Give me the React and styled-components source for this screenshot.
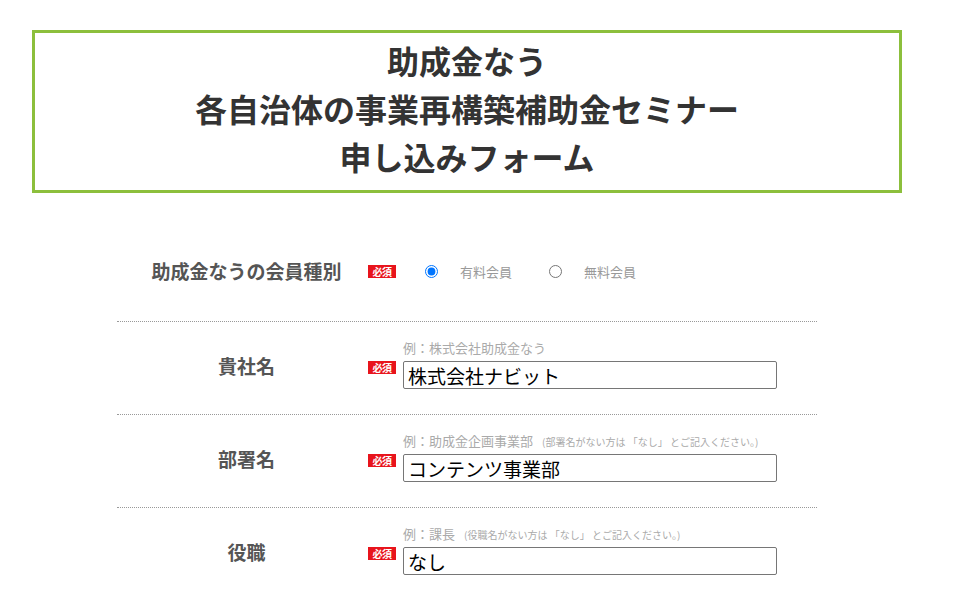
import React from "react";
import styled, { createGlobalStyle } from "styled-components";

const GlobalStyle = createGlobalStyle`
  body {
    margin: 0;
    background: #fff;
    font-family: "Noto Sans CJK JP", "Noto Sans", sans-serif;
  }
`;

const Page = styled.div`
  width: 934px;
  padding-top: 30px;
`;

const TitleBox = styled.div`
  margin: 0 32px;
  border: 3px solid #8cbf3c;
  padding: 3px 0 10px;
  text-align: center;
`;

const Title = styled.h1`
  margin: 0;
  font-size: 32px;
  line-height: 48px;
  font-weight: bold;
  color: #333;
`;

const Form = styled.div`
  width: 700px;
  margin: 28px auto 0;
`;

const Row = styled.div`
  display: grid;
  grid-template-columns: 251px 1fr;
  height: ${(p) => p.height}px;
  border-top: ${(p) => (p.first ? "none" : "1px dotted #999")};
`;

const Label = styled.div`
  display: flex;
  align-items: center;
  justify-content: center;
  padding: 0 0 ${(p) => (p.raise ? 5 : 1)}px 8px;
  font-size: 19px;
  font-weight: bold;
  color: #555;
`;

const Field = styled.div`
  padding-top: 16px;
`;

const InlineField = styled.div`
  display: flex;
  align-items: center;
`;

const Hint = styled.div`
  margin-left: 35px;
  height: 20px;
  line-height: 20px;
  font-size: 13px;
  color: #aaa;
  white-space: nowrap;
`;

const SubHint = styled.span`
  margin-left: 9px;
  font-size: 10px;
`;

const InputLine = styled.div`
  display: flex;
  align-items: flex-start;
  gap: 7px;
  margin-top: 3px;
`;

const Badge = styled.span`
  display: inline-block;
  width: 28px;
  height: 13px;
  line-height: 13px;
  background: #e8141c;
  color: #fff;
  font-size: 10px;
  font-weight: bold;
  text-align: center;
  letter-spacing: -0.5px;
  flex-shrink: 0;
`;

const TextInput = styled.input`
  box-sizing: border-box;
  width: 374px;
  height: 28px;
  padding: 0 4px;
  border: 1px solid #767676;
  border-radius: 2px;
  font-family: "Noto Sans CJK JP", sans-serif;
  font-size: 19px;
  color: #000;
  outline: none;
`;

const RadioGroup = styled.div`
  display: flex;
  align-items: center;
  gap: 37px;
  margin-left: 29px;
`;

const RadioOption = styled.label`
  display: flex;
  align-items: center;
  gap: 22px;
  font-size: 13px;
  color: #999;
`;

const Radio = styled.input`
  width: 13px;
  height: 13px;
  margin: 0;
`;

const fields = [
  {
    label: "貴社名",
    hint: "例：株式会社助成金なう",
    value: "株式会社ナビット",
  },
  {
    label: "部署名",
    hint: "例：助成金企画事業部",
    sub: "(部署名がない方は 「なし」 とご記入ください。)",
    value: "コンテンツ事業部",
  },
  {
    label: "役職",
    hint: "例：課長",
    sub: "(役職名がない方は 「なし」 とご記入ください。)",
    value: "なし",
  },
];

export default function App() {
  return (
    <Page>
      <GlobalStyle />
      <TitleBox>
        <Title>
          助成金なう
          <br />
          各自治体の事業再構築補助金セミナー
          <br />
          申し込みフォーム
        </Title>
      </TitleBox>
      <Form>
        <Row first height={100}>
          <Label>助成金なうの会員種別</Label>
          <InlineField>
            <Badge>必須</Badge>
            <RadioGroup>
              <RadioOption>
                <Radio type="radio" name="member" defaultChecked />
                有料会員
              </RadioOption>
              <RadioOption>
                <Radio type="radio" name="member" />
                無料会員
              </RadioOption>
            </RadioGroup>
          </InlineField>
        </Row>
        {fields.map((f) => (
          <Row key={f.label} height={92}>
            <Label raise>{f.label}</Label>
            <Field>
              <Hint>
                {f.hint}
                {f.sub && <SubHint>{f.sub}</SubHint>}
              </Hint>
              <InputLine>
                <Badge>必須</Badge>
                <TextInput type="text" defaultValue={f.value} />
              </InputLine>
            </Field>
          </Row>
        ))}
      </Form>
    </Page>
  );
}
